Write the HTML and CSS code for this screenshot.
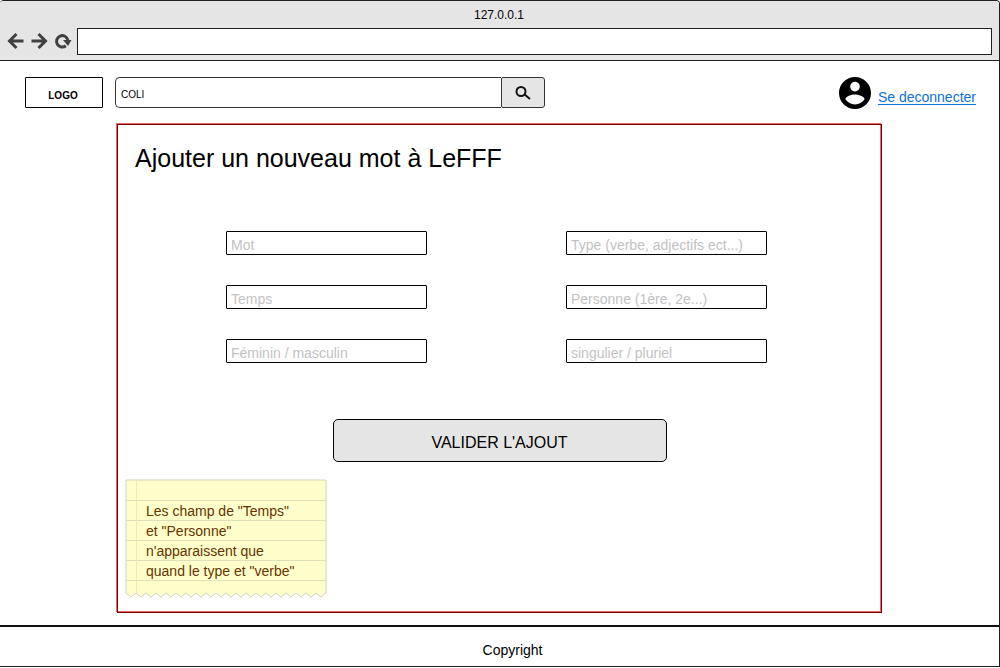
FILE: index.html
```html
<!DOCTYPE html>
<html lang="fr">
<head>
<meta charset="utf-8">
<title>Ajouter un nouveau mot à LeFFF</title>
<link rel="stylesheet" href="styles.css">
</head>
<body>
<div class="window">
  <div class="chrome">
    <div class="chrome-title">127.0.0.1</div>
    <div class="chrome-bar">
      <button class="nav-button" type="button" aria-label="Précédent">
        <svg class="nav-icon" viewBox="0 0 18 18"><path d="M10.500 2 3.500 9l7 7M3.500 9H17.500"/></svg>
      </button>
      <button class="nav-button" type="button" aria-label="Suivant">
        <svg class="nav-icon" viewBox="0 0 18 18"><path d="M8.500 2l7 7-7 7M15.500 9H1.500"/></svg>
      </button>
      <button class="nav-button" type="button" aria-label="Recharger">
        <svg class="nav-icon" viewBox="0 0 18 18"><path d="M11.800 13.800A5.700 5.700 0 1 1 13.800 8"/><path class="nav-tip" d="M9 8H17.500L14 14z"/></svg>
      </button>
      <input class="address" type="text" aria-label="Adresse">
    </div>
  </div>

  <header class="site-header">
    <div class="logo">LOGO</div>
    <form class="search">
      <input class="search-input" type="text" value="COLI" aria-label="Recherche">
      <button class="search-button" type="button" aria-label="Rechercher">
        <svg class="search-icon" viewBox="0 0 16 14"><circle cx="6" cy="5.500" r="4.500"/><path d="M9.300 8.300 15 13"/></svg>
      </button>
    </form>
    <div class="account">
      <svg class="avatar" viewBox="2 2 20 20" aria-hidden="true"><path d="M12 2C6.480 2 2 6.480 2 12s4.480 10 10 10 10-4.480 10-10S17.520 2 12 2zm0 3c1.660 0 3 1.340 3 3s-1.340 3-3 3-3-1.340-3-3 1.340-3 3-3zm0 14.200c-2.500 0-4.710-1.280-6-3.220.03-1.990 4-3.080 6-3.080 1.990 0 5.970 1.090 6 3.080-1.290 1.940-3.500 3.220-6 3.220z"/></svg>
      <a class="logout" href="#">Se deconnecter</a>
    </div>
  </header>

  <main class="content">
    <section class="panel">
      <h1 class="panel-title">Ajouter un nouveau mot à LeFFF</h1>
      <form class="word-form">
        <div class="fields">
          <input class="field" type="text" placeholder="Mot" aria-label="Mot">
          <input class="field" type="text" placeholder="Type (verbe, adjectifs ect...)" aria-label="Type">
          <input class="field" type="text" placeholder="Temps" aria-label="Temps">
          <input class="field" type="text" placeholder="Personne (1ère, 2e...)" aria-label="Personne">
          <input class="field" type="text" placeholder="Féminin / masculin" aria-label="Genre">
          <input class="field" type="text" placeholder="singulier / pluriel" aria-label="Nombre">
        </div>
        <button class="submit" type="button">VALIDER L'AJOUT</button>
      </form>
      <aside class="note">
        <svg class="note-paper" viewBox="0 0 202 120" preserveAspectRatio="none" aria-hidden="true">
          <path class="paper" d="M1 1H201V114l-5 4-5-4-5 4-5-4-5 4-5-4-5 4-5-4-5 4-5-4-5 4-5-4-5 4-5-4-5 4-5-4-5 4-5-4-5 4-5-4-5 4-5-4-5 4-5-4-5 4-5-4-5 4-5-4-5 4-5-4-5 4-5-4-5 4-5-4-5 4-5-4-5 4-5-4-5 4-5-4z"/>
          <path class="rule" d="M1 21.500H201M1 41.500H201M1 61.500H201M1 81.500H201M1 101.500H201"/>
          <path class="margin-line" d="M11.500 2V114"/>
        </svg>
        <p class="note-text">Les champ de "Temps"<br>et "Personne"<br>n'apparaissent que<br>quand le type et "verbe"</p>
      </aside>
    </section>
  </main>

  <footer class="site-footer">Copyright</footer>
</div>
</body>
</html>
```

FILE: styles.css
```css
* {
  box-sizing: border-box;
}

body {
  margin: 0;
  background: #fff;
  color: #000;
  font-family: "Liberation Sans", Arial, sans-serif;
  font-size: 14px;
}

button,
input {
  margin: 0;
  font: inherit;
  color: inherit;
}

.window {
  display: flex;
  flex-direction: column;
  min-height: calc(100vh - 1px);
  border: 1px solid #231f20;
  border-left: 0;
  border-radius: 4px 4px 0 0;
  overflow: hidden;
}

.chrome {
  padding: 6px 7px 5px 6px;
  background: #e5e5e5;
  border-bottom: 1px solid #231f20;
}

.chrome-title {
  font-size: 12px;
  line-height: 16px;
  text-align: center;
}

.chrome-bar {
  display: flex;
  align-items: flex-start;
  gap: 6px;
  margin-top: 5px;
}

.nav-button {
  display: flex;
  margin-top: 4px;
  padding: 0;
  border: 0;
  background: none;
}

.nav-icon {
  width: 18px;
  height: 18px;
  fill: none;
  stroke: #404040;
  stroke-width: 3;
}

.nav-tip {
  fill: #404040;
  stroke: none;
}

.address {
  flex: 1;
  min-width: 0;
  height: 27px;
  margin-left: -1px;
  padding: 0 5px;
  border: 1px solid #231f20;
  background: #fff;
}

.site-header {
  display: flex;
  gap: 12px;
  padding: 16px 23px 0 25px;
}

.logo {
  width: 78px;
  height: 31px;
  padding: 2px 2px 0 0;
  border: 1px solid #000;
  border-radius: 1px;
  font-size: 10px;
  font-weight: bold;
  line-height: 31px;
  text-align: center;
}

.search {
  display: flex;
  width: 430px;
  height: 31px;
}

.search-input {
  flex: 1;
  min-width: 0;
  padding: 4px 5px 0;
  border: 1px solid #333;
  border-right: 0;
  border-radius: 5px 0 0 5px;
  background: #fff;
  font-size: 10px;
}

.search-button {
  display: flex;
  align-items: center;
  justify-content: center;
  width: 44px;
  padding: 0;
  border: 1px solid #333;
  border-radius: 2px 3px 3px 2px;
  background: #e5e5e5;
}

.search-icon {
  width: 16px;
  height: 14px;
  fill: none;
  stroke: #111;
  stroke-width: 2;
}

.account {
  display: flex;
  gap: 7px;
  margin-left: auto;
}

.avatar {
  width: 32px;
  height: 32px;
}

.logout {
  padding-top: 12px;
  color: #0c72e0;
  line-height: 16px;
  text-underline-offset: 2px;
}

.content {
  display: flex;
  flex: 1;
  padding: 15px 117px 12px;
}

.panel {
  flex: 1;
  padding: 18px 7px 11px;
  border: 1px solid #7d0000;
  box-shadow: -1px -1px 0 #e66a6a, inset -1px -1px 0 #e66a6a;
}

.panel-title {
  margin: 0 10px;
  font-size: 25px;
  font-weight: normal;
  line-height: 30px;
}

.word-form {
  display: flex;
  flex-direction: column;
  align-items: center;
  margin-top: 58px;
}

.fields {
  display: grid;
  grid-template-columns: 1fr 1fr;
  gap: 30px 139px;
  align-self: stretch;
  padding: 0 107px 0 101px;
}

.field {
  width: 100%;
  height: 24px;
  padding: 4px 4px 0;
  border: 1px solid #000;
  border-radius: 1px;
  background: #fff;
}

.field::placeholder {
  color: #c2c2c2;
  opacity: 1;
}

.submit {
  width: 334px;
  height: 43px;
  margin-top: 56px;
  padding: 4px 0 0;
  border: 1px solid #000;
  border-radius: 5px;
  background: #e5e5e5;
  font-size: 16px;
}

.note {
  position: relative;
  width: 202px;
  margin-top: 17px;
  padding: 22px 8px 18px 21px;
  color: #663300;
}

.note-paper {
  position: absolute;
  inset: 0;
  width: 100%;
  height: 100%;
}

.paper {
  fill: #ffc;
  stroke: #d0d0bc;
  stroke-width: 1;
}

.rule {
  fill: none;
  stroke: #e0e0b8;
}

.margin-line {
  fill: none;
  stroke: #ffe2b4;
}

.note-text {
  position: relative;
  margin: 0;
  line-height: 20px;
}

.site-footer {
  padding: 14px 0 7px 26px;
  border-top: 2px solid #111;
  line-height: 18px;
  text-align: center;
}
```
